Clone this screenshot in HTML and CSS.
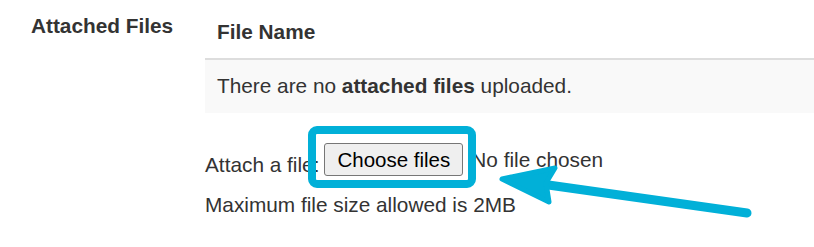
FILE: index.html
```
<!DOCTYPE html>
<html>
<head>
  <title>Attached Files</title>
  <meta name="viewport" content="width=device-width, initial-scale=1">
  <link rel="stylesheet" href="styles.css">
</head>
<body>
  <div class="field">
    <label class="field-label">Attached Files</label>
    <div class="field-body">
      <table class="files">
        <thead><tr><th>File Name</th></tr></thead>
        <tbody><tr><td>There are no <b>attached files</b> uploaded.</td></tr></tbody>
      </table>
      <div class="attach">
        <span class="attach-label">Attach a file:</span>
        <button type="button" class="choose">Choose files</button>
        <span class="chosen">No file chosen</span>
      </div>
      <p class="note">Maximum file size allowed is 2MB</p>
    </div>
  </div>

  <svg class="markup" width="814" height="247" viewBox="0 0 814 247">
    <rect x="312" y="130" width="160" height="54" rx="5" fill="none" stroke="#01b0d8" stroke-width="8"/>
    <line x1="747" y1="213" x2="520" y2="181" stroke="#01b0d8" stroke-width="9" stroke-linecap="round"/>
    <polygon points="502,179 555,168 546,183 549,202" fill="#01b0d8" stroke="#01b0d8" stroke-width="5" stroke-linejoin="round"/>
  </svg>
</body>
</html>
```

FILE: styles.css
```
body { margin:0; font-family:"Liberation Sans",Arial,sans-serif; font-size:20.8px; line-height:29px; color:#333; background:#fff; }
.field { display:grid; grid-template-columns:174px 1fr; padding-left:31px; }
.field-label { font-weight:bold; padding-top:11px; }
.field-body { padding-top:5px; }
.files { width:100%; border-collapse:collapse; }
.files th { text-align:left; padding:12px 12px; border-bottom:2px solid #ddd; }
.files td { background:#f9f9f9; padding:11px 12px 13px; }
.attach { display:flex; align-items:flex-start; height:33px; margin-top:30px; }
.attach-label { margin-top:7px; margin-right:5px; }
.choose { height:33px; padding:1px 12px; font:20.5px/29px "Liberation Sans",Arial,sans-serif; color:#000;
          background:#efefef; border:1px solid #767676; border-radius:3px; }
.chosen { margin-top:2px; margin-left:8px; }
.note { margin:14px 0 0; }
.markup { position:absolute; top:0; left:0; pointer-events:none; }
```
